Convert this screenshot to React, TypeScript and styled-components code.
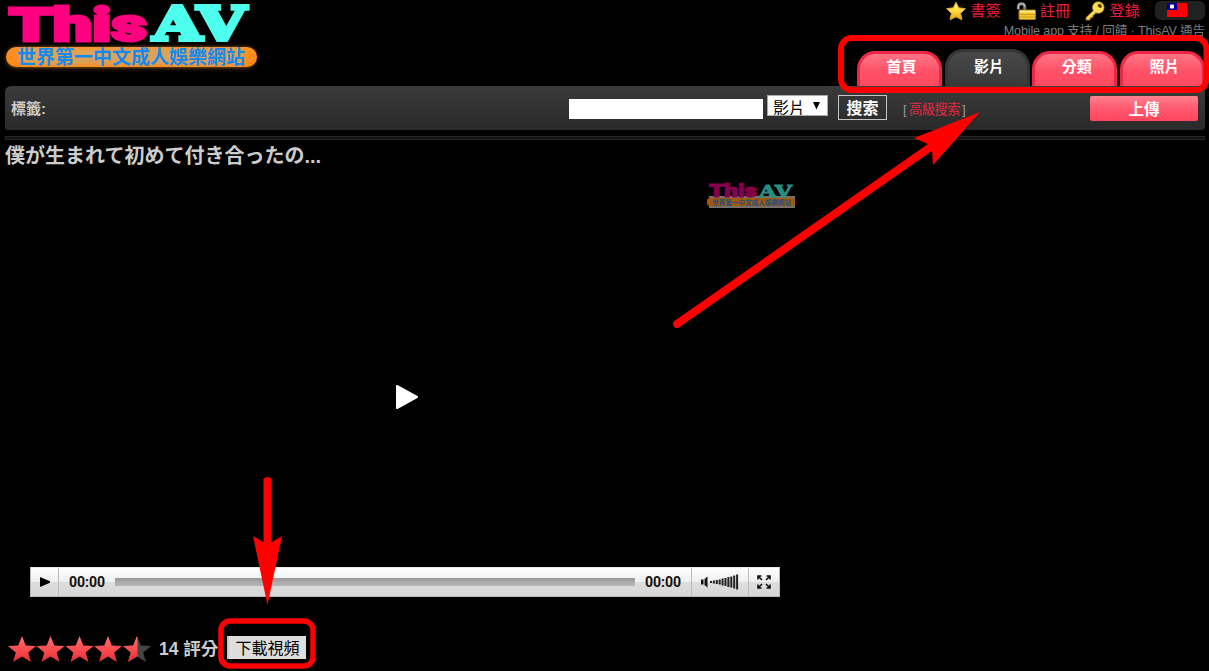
import React from "react";
import styled, { createGlobalStyle, css } from "styled-components";

const sans = `"Liberation Sans", "Noto Sans CJK TC", sans-serif`;

const GlobalStyle = createGlobalStyle`
  * { box-sizing: border-box; }
  body { margin: 0; background: #000; font-family: ${sans}; color: #ccc; }
  button, input { font-family: inherit; margin: 0; }
`;

const Page = styled.div`
  position: relative;
  width: 1209px;
  height: 671px;
  overflow: hidden;
  padding: 0 4px 0 5px;
  background: #000;
`;

const Header = styled.header`
  display: flex;
  justify-content: space-between;
  height: 86px;
`;

const LogoImage = styled.svg`
  display: block;
  margin-left: -5px;
`;

const HeaderSide = styled.div`
  display: flex;
  flex-direction: column;
  align-items: flex-end;
  width: 360px;
`;

const UserLinks = styled.nav`
  display: flex;
  align-items: center;
  height: 21px;
`;

const UserLink = styled.a<{ $gap: number }>`
  display: flex;
  align-items: center;
  gap: 4px;
  margin-right: ${(p) => p.$gap}px;
  font-size: 15.3px;
  line-height: 20px;
  color: #ee1c3a;
  svg { display: block; }
`;

const LanguagePicker = styled.div`
  display: flex;
  width: 50px;
  height: 19px;
  padding: 2px 0 0 12px;
  border-radius: 6px;
  background: #212121;
  svg { display: block; }
`;

const Notice = styled.div`
  height: 19px;
  font-size: 12.6px;
  line-height: 21px;
  letter-spacing: -0.14px;
  white-space: pre;
  color: #7c7c7c;
`;

const Tabs = styled.nav`
  display: flex;
  align-items: flex-end;
  gap: 2.7px;
  height: 46px;
`;

const Tab = styled.a<{ $active?: boolean }>`
  width: 85px;
  height: 35px;
  padding: 4px 0 0 4px;
  border-radius: 18px 18px 0 0;
  border: 3px solid #ee2644;
  border-bottom: 0;
  background: linear-gradient(#ff7584, #ff5168 55%, #ff4961);
  color: #fff;
  font-size: 15px;
  font-weight: 700;
  line-height: 17px;
  text-align: center;
  ${(p) =>
    p.$active &&
    css`
      height: 37px;
      padding-top: 6px;
      border-color: #353535;
      background: linear-gradient(#484848, #393939);
    `}
`;

const SearchBar = styled.section`
  display: flex;
  align-items: flex-start;
  height: 44px;
  padding: 9px 7px 0 6px;
  border-radius: 6px 6px 3px 3px;
  background: linear-gradient(#3b3b3b, #292929);
`;

const TagLabel = styled.div`
  width: 558px;
  padding-top: 3px;
  font-size: 15px;
  font-weight: 700;
  line-height: 22px;
  color: #ccc;
`;

const SearchInput = styled.input`
  width: 194px;
  height: 20px;
  margin-top: 4px;
  padding: 0 4px;
  border: 0;
  background: #fff;
`;

const TypeSelect = styled.div`
  display: flex;
  justify-content: space-between;
  width: 61px;
  height: 21px;
  margin-left: 4px;
  padding: 1px 7px 0 5px;
  border: 1px solid #a9a9a9;
  background: #fff;
  color: #000;
  font-size: 16px;
  line-height: 24px;
  overflow: hidden;
  svg { display: block; margin-top: 5px; }
`;

const SearchButton = styled.button`
  width: 49px;
  height: 25px;
  margin-left: 10px;
  padding: 0;
  border: 1px solid #c4c4c4;
  background: transparent;
  color: #fff;
  font-size: 16px;
  font-weight: 700;
  line-height: 25px;
`;

const Advanced = styled.div`
  flex: 1;
  margin-left: 16px;
  padding-top: 5px;
  font-size: 13.3px;
  line-height: 19px;
  letter-spacing: -0.6px;
  color: #999;
  a { color: #e5283f; margin: 0 2px 0 3px; }
`;

const UploadButton = styled.button`
  width: 108px;
  height: 25px;
  margin-top: 1px;
  padding: 0;
  border: 0;
  border-radius: 2px;
  background: linear-gradient(#ff8391, #ff5c71 45%, #ff445d);
  color: #fff;
  font-size: 15.5px;
  font-weight: 700;
  line-height: 27px;
`;

const Divider = styled.hr`
  height: 4px;
  margin: 6px 0 0;
  border: 1px solid #262626;
  background: #111;
`;

const VideoTitle = styled.h1`
  height: 30px;
  margin: 0;
  font-family: "Liberation Sans", "Noto Sans CJK JP", sans-serif;
  font-size: 20px;
  font-weight: 700;
  line-height: 32px;
  color: #ccc;
`;

const Player = styled.div`
  display: flex;
  flex-direction: column;
  width: 800px;
  height: 427px;
`;

const Watermark = styled.svg`
  display: block;
  margin: 11px 0 0 702px;
`;

const Stage = styled.div`
  display: flex;
  flex: 1;
  padding: 173px 0 0 390px;
`;

const Controls = styled.div`
  display: flex;
  align-items: stretch;
  width: 750px;
  height: 30px;
  margin-left: 25px;
  border: 1px solid #b8b8b8;
  border-top-color: #e8e8e8;
  background: linear-gradient(#fefefe, #efefef 49%, #dedede 50%, #d6d6d6);
`;

const ControlCell = styled.div<{ $w: number; $side?: "left" | "right" }>`
  display: flex;
  align-items: center;
  justify-content: center;
  width: ${(p) => p.$w}px;
  ${(p) => p.$side === "right" && "border-right: 1px solid #bcbcbc;"}
  ${(p) => p.$side === "left" && "border-left: 1px solid #bcbcbc;"}
`;

const Time = styled.span`
  width: 56px;
  font-family: Roboto, sans-serif;
  font-size: 14px;
  font-weight: 700;
  line-height: 29px;
  text-align: center;
  color: #111;
`;

const Track = styled.div`
  width: 520px;
  height: 8px;
  margin-top: 10px;
  background: linear-gradient(#989898, #a9a9a9 45%, #b6b6b6);
`;

const RatingRow = styled.div`
  display: flex;
  align-items: flex-start;
  padding: 39px 0 0 2px;
  svg { display: block; }
`;

const Votes = styled.div`
  width: 68px;
  margin-left: 7px;
  font-size: 17.5px;
  font-weight: 700;
  line-height: 26px;
  white-space: nowrap;
  color: #ccc;
`;

const DownloadButton = styled.button`
  width: 79px;
  height: 23px;
  padding: 0;
  border: 0;
  border-left: 2px solid #c8c8c8;
  background: #ddd;
  color: #000;
  font-size: 16px;
  line-height: 25px;
  overflow: hidden;
`;

const Annotations = styled.svg`
  position: absolute;
  inset: 0;
  pointer-events: none;
`;

const slab = { fontFamily: '"DejaVu Serif", serif', fontWeight: 700 };
const black = { fontFamily: 'Roboto, "Liberation Sans", sans-serif', fontWeight: 900 };

function Logo() {
  return (
    <LogoImage width="270" height="76" viewBox="0 0 270 76">
      <defs>
        <filter id="glow" x="-10%" y="-40%" width="120%" height="180%">
          <feGaussianBlur stdDeviation="2" />
        </filter>
        <linearGradient id="pill" x1="0" x2="0" y1="0" y2="1">
          <stop offset="0" stopColor="#ff9226" />
          <stop offset="1" stopColor="#ff8712" />
        </linearGradient>
      </defs>
      <rect x="6" y="47" width="251" height="21" rx="10.5" fill="#70430f" filter="url(#glow)" />
      <rect x="6" y="47" width="251" height="20" rx="10" fill="url(#pill)" />
      <rect x="19" y="49" width="225" height="16" rx="6" fill="#c8b07a" opacity=".65" filter="url(#glow)" />
      <text x="9" y="40.5" fontSize="47" fill="#ff0080" stroke="#ff0080" strokeWidth="3" textLength="138" lengthAdjust="spacingAndGlyphs" {...black}>This</text>
      <text x="153" y="40" fontSize="47" fill="#4dffec" stroke="#4dffec" strokeWidth="4" textLength="93" lengthAdjust="spacingAndGlyphs" {...slab}>AV</text>
      <text x="17" y="64" fontSize="19" fontWeight="700" fill="#1489f0" textLength="228" fontFamily="Noto Sans CJK TC, sans-serif">世界第一中文成人娛樂網站</text>
    </LogoImage>
  );
}

function PlayerMark() {
  return (
    <Watermark width="92" height="30" viewBox="0 0 92 30">
      <rect x="2" y="15" width="86" height="12" fill="#77716a" />
      <rect x="0" y="17" width="88" height="8" rx="3" fill="#a55806" />
      <text x="2" y="15.5" fontSize="18" fill="#86004a" stroke="#86004a" strokeWidth="1" textLength="48" lengthAdjust="spacingAndGlyphs" {...black}>This</text>
      <text x="52" y="15.5" fontSize="17.5" fill="#2a8d83" stroke="#2a8d83" strokeWidth="1" textLength="33" lengthAdjust="spacingAndGlyphs" {...slab}>AV</text>
      <text x="5" y="24" fontSize="7" fontWeight="700" fill="#17508a" textLength="79" lengthAdjust="spacingAndGlyphs" fontFamily="Noto Sans CJK TC, sans-serif">世界第一中文成人娛樂網站</text>
    </Watermark>
  );
}

function StarIcon() {
  return (
    <svg width="20" height="20" viewBox="0 0 20 20">
      <defs>
        <linearGradient id="gold" x1="0" x2="0" y1="0" y2="1">
          <stop offset="0" stopColor="#fff3a0" />
          <stop offset=".5" stopColor="#ffdc3a" />
          <stop offset="1" stopColor="#dda51a" />
        </linearGradient>
      </defs>
      <path d="M10 1.2 12.8 6.8 19.4 7.6 14.6 12.3 16 18.8 10 15.8 4 18.8 5.4 12.3 .6 7.6 7.2 6.8Z" fill="url(#gold)" stroke="#d5a325" strokeLinejoin="round" />
    </svg>
  );
}

function LockIcon() {
  return (
    <svg width="20" height="20" viewBox="0 0 20 20">
      <path d="M2.3 8.5V6Q2.3 2.7 5.5 2.7T8.7 6V9.5" fill="none" stroke="#777" strokeWidth="3" />
      <path d="M2.3 8V6Q2.3 2.7 5.5 2.7T8.7 6" fill="none" stroke="#bbb" strokeWidth="1.2" />
      <rect x="3" y="9" width="16.5" height="9.5" rx="1" fill="#f3c92e" stroke="#a77b13" />
      <path d="M4 10.5H19" stroke="#fff3a2" strokeWidth="1.5" />
      <path d="M4 13.5H19M4 16H19" stroke="#c99a1d" />
    </svg>
  );
}

function KeyIcon() {
  return (
    <svg width="20" height="20" viewBox="0 0 20 20">
      <path d="M10.3 7.7 1 16.6V19H5L5.5 16.8 7.7 16.5 8.2 14.3 13 10.7Z" fill="#f5cd3b" stroke="#a97c17" strokeWidth=".8" />
      <circle cx="13.3" cy="6.5" r="5.8" fill="#ffdf55" stroke="#b88a20" strokeWidth=".8" />
      <ellipse cx="14.8" cy="4.8" rx="2.3" ry="1.8" fill="#5e4105" transform="rotate(38 14.8 4.8)" />
      <path d="M2.5 16.8 10.5 9.3" stroke="#fff0a0" />
    </svg>
  );
}

function Rating() {
  const star = "M14 0 17.8 9.4 28 10 20.2 16.4 23 26 14 20.5 5 26 7.8 16.4 0 10 10.2 9.4Z";
  return (
    <svg width="145" height="26" viewBox="0 0 145 26">
      <defs>
        <linearGradient id="red" x1="0" x2="0" y1="0" y2="1">
          <stop offset="0" stopColor="#ff7070" />
          <stop offset=".6" stopColor="#fa474b" />
          <stop offset="1" stopColor="#dc3036" />
        </linearGradient>
        <clipPath id="half"><rect width="14.5" height="26" /></clipPath>
      </defs>
      {[1, 29.5, 58.5, 87, 116].map((x, i) => (
        <g key={x} transform={`translate(${x} 0)`}>
          <path d={star} fill={i === 4 ? "#444" : "url(#red)"} />
          {i === 4 && <path d={star} fill="url(#red)" clipPath="url(#half)" />}
        </g>
      ))}
    </svg>
  );
}

function VolumeIcon() {
  const heights = [2, 3, 4, 5, 7, 8, 10, 11, 13, 15];
  return (
    <svg width="40" height="18" viewBox="0 0 40 18">
      <path d="M1 6.5H3.5V11.5H1ZM4.5 6 7.5 3.5V14.5L4.5 12Z" fill="#111" />
      {heights.map((h, i) => (
        <rect key={i} x={10 + i * 2.9} y={9 - h / 2} width="2" height={h} fill="#222" />
      ))}
    </svg>
  );
}

export default function App() {
  return (
    <Page>
      <GlobalStyle />
      <Header>
        <Logo />
        <HeaderSide>
          <UserLinks>
            <UserLink $gap={15}><StarIcon />書簽</UserLink>
            <UserLink $gap={15}><LockIcon />註冊</UserLink>
            <UserLink $gap={15}><KeyIcon />登錄</UserLink>
            <LanguagePicker>
              <svg width="20" height="14" viewBox="0 0 20 14">
                <rect width="20" height="14" fill="#fe0000" />
                <rect width="10" height="7" fill="#000095" />
                <rect x="3" y="1.5" width="4" height="4" rx="1" fill="#fff" />
              </svg>
            </LanguagePicker>
          </UserLinks>
          <Notice>Mobile app 支持 / 回饋 · ThisAV 通告</Notice>
          <Tabs>
            <Tab>首頁</Tab>
            <Tab $active>影片</Tab>
            <Tab>分類</Tab>
            <Tab>照片</Tab>
          </Tabs>
        </HeaderSide>
      </Header>
      <SearchBar>
        <TagLabel>標籤:</TagLabel>
        <SearchInput />
        <TypeSelect>
          影片
          <svg width="7" height="8" viewBox="0 0 7 8"><path d="M0 0H7L3.5 7.5Z" fill="#000" /></svg>
        </TypeSelect>
        <SearchButton>搜索</SearchButton>
        <Advanced>[<a>高級搜索</a>]</Advanced>
        <UploadButton>上傳</UploadButton>
      </SearchBar>
      <Divider />
      <VideoTitle>僕が生まれて初めて付き合ったの...</VideoTitle>
      <Player>
        <PlayerMark />
        <Stage>
          <svg width="24" height="26" viewBox="0 0 24 26">
            <path d="M2 2 22 13 2 24Z" fill="#fff" stroke="#fff" strokeWidth="2" strokeLinejoin="round" />
          </svg>
        </Stage>
        <Controls>
          <ControlCell $w={28} $side="right">
            <svg width="10" height="10" viewBox="0 0 10 10"><path d="M0 0 10 4.2V5.8L0 10Z" fill="#000" /></svg>
          </ControlCell>
          <Time>00:00</Time>
          <Track />
          <Time>00:00</Time>
          <ControlCell $w={57} $side="left"><VolumeIcon /></ControlCell>
          <ControlCell $w={31} $side="left">
            <svg width="14" height="14" viewBox="0 0 14 14" fill="none" stroke="#111" strokeWidth="1.6">
              <path d="M1 4.5V1H4.5M1 1 5 5M9.5 1H13V4.5M13 1 9 5M1 9.5V13H4.5M1 13 5 9M9.5 13H13V9.5M13 13 9 9" />
            </svg>
          </ControlCell>
        </Controls>
      </Player>
      <RatingRow>
        <Rating />
        <Votes>14 評分</Votes>
        <DownloadButton>下載視頻</DownloadButton>
      </RatingRow>
      <Annotations width="1209" height="671" viewBox="0 0 1209 671">
        <g fill="none" stroke="#f00">
          <rect x="841" y="38" width="365.5" height="52" rx="11" strokeWidth="6" />
          <rect x="221" y="621" width="92" height="45" rx="9" strokeWidth="5.5" />
          <path d="M677 324 932 146" strokeWidth="8" strokeLinecap="round" />
          <path d="M267.5 481V545" strokeWidth="8" strokeLinecap="round" />
        </g>
        <path d="M980 112 914 138 928 144 932 151 933 165Z" fill="#f00" />
        <path d="M267.5 605 253 536 263 542H272L282 536Z" fill="#f00" />
      </Annotations>
    </Page>
  );
}
